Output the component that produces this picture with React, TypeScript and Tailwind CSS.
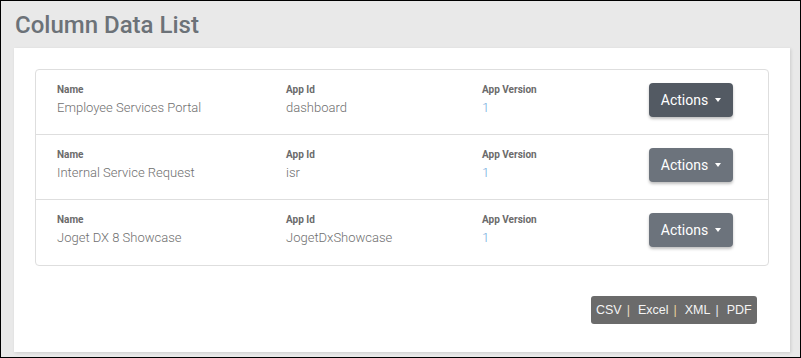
import React from "react";

const rows = [
  { name: "Employee Services Portal", appId: "dashboard", version: "1", active: true },
  { name: "Internal Service Request", appId: "isr", version: "1" },
  { name: "Joget DX 8 Showcase", appId: "JogetDxShowcase", version: "1" },
];

export default function App() {
  return (
    <div className="w-[801px] h-[358px] border border-black bg-[#e9e9e9] font-['Roboto',sans-serif] flex flex-col">
      <h1 className="px-[14px] pt-[9px] h-[47px] text-[24px] leading-[30px] font-medium text-[#6c7278]">
        Column Data List
      </h1>

      <div className="ml-[13px] w-[776px] h-[304px] bg-white shadow-[1px_1px_3px_rgba(0,0,0,0.12)] px-[21px] pt-[21px]">
        <div className="border border-[#dedede] rounded-[4px]">
          {rows.map((r, i) => (
            <Row key={r.appId} {...r} last={i === rows.length - 1} />
          ))}
        </div>

        <div className="flex justify-end pr-[12px] mt-[30px]">
          <div className="bg-[#6b6b6b] rounded-[3px] h-[28px] w-[166px] flex items-center pl-[5px] font-['Liberation_Sans',Arial,sans-serif] text-[12.5px] text-[#f4f4f4]">
            <span>CSV</span>
            <span className="ml-[5px] mr-[8px] text-[#e8dcc0]">|</span>
            <span>Excel</span>
            <span className="ml-[5px] mr-[8px] text-[#e8d29a]">|</span>
            <span>XML</span>
            <span className="ml-[5px] mr-[8px] text-[#e2e8f0]">|</span>
            <span>PDF</span>
          </div>
        </div>
      </div>
    </div>
  );
}

function Row({ name, appId, version, active, last }: {
  name: string; appId: string; version: string; active?: boolean; last?: boolean;
}) {
  return (
    <div className={"h-[65px] flex items-start pl-[21px] pt-[13px] " + (last ? "" : "border-b border-[#dedede]")}>
      <Cell label="Name" className="w-[229px]">{name}</Cell>
      <Cell label="App Id" className="w-[196px]">{appId}</Cell>
      <Cell label="App Version" className="w-[167px]" blue>{version}</Cell>
      <button
        className={
          "w-[84px] h-[34px] rounded-[4px] text-white text-[14px] flex items-center justify-center gap-[7px] shadow-[0_2px_3px_rgba(0,0,0,0.25)] " +
          (active ? "bg-[#535a63]" : "bg-[#6c737c]")
        }
      >
        Actions
        <span className="w-0 h-0 border-l-[3.5px] border-r-[3.5px] border-t-[4px] border-l-transparent border-r-transparent border-t-white" />
      </button>
    </div>
  );
}

function Cell({ label, children, className, blue }: {
  label: string; children: React.ReactNode; className?: string; blue?: boolean;
}) {
  return (
    <div className={className}>
      <div className="mt-[1px] text-[10px] leading-[12px] font-bold text-[#6b6b6b]">{label}</div>
      <div className={"mt-[4px] text-[13px] leading-[16px] font-light " + (blue ? "text-[#6fa8dc]" : "text-[#6f6f6f]")}>
        {children}
      </div>
    </div>
  );
}
